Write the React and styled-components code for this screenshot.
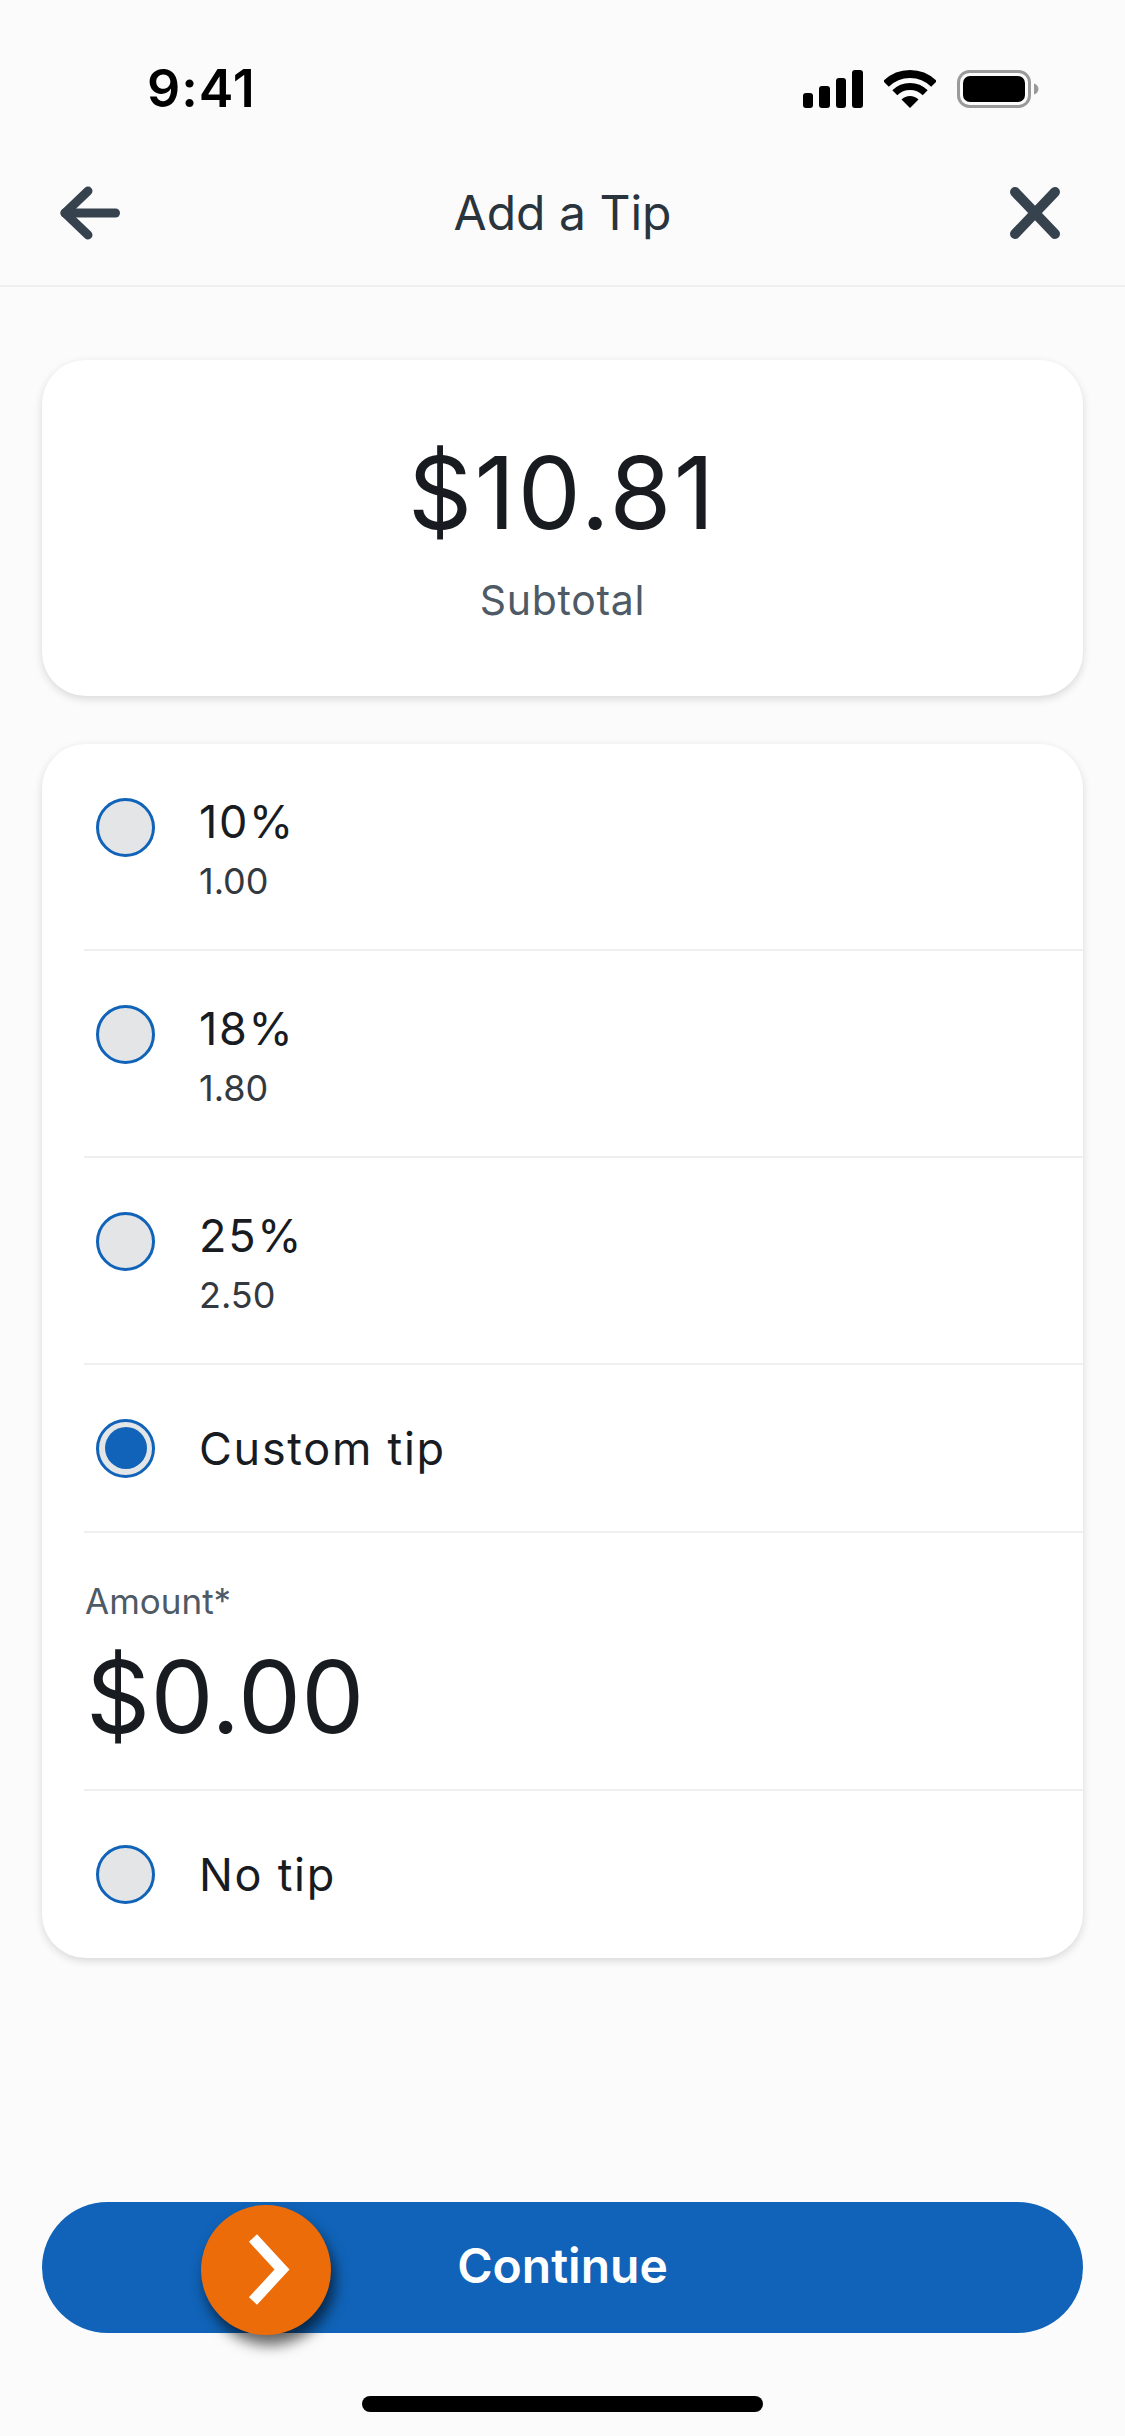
import React from 'react';
import styled, { createGlobalStyle } from 'styled-components';

const GlobalStyle = createGlobalStyle`
  * {
    box-sizing: border-box;
  }

  body {
    margin: 0;
    background-color: #fbfbfb;
    font-family: Inter, "Liberation Sans", sans-serif;
  }
`;

const Screen = styled.div`
  display: flex;
  flex-direction: column;
  width: 1125px;
  height: 2436px;
  overflow: hidden;
  background-color: #fbfbfb;
`;

const StatusBar = styled.div`
  display: flex;
  align-items: center;
  justify-content: space-between;
  height: 140px;
  padding: 37px 86px 0 147px;
`;

const Clock = styled.span`
  font-size: 52px;
  font-weight: 600;
  letter-spacing: 1px;
  line-height: 1;
  color: #000;
`;

const StatusIcons = styled.div`
  display: flex;
  align-items: center;
  gap: 21px;
`;

const NavBar = styled.header`
  display: grid;
  grid-template-columns: 1fr auto 1fr;
  align-items: center;
  height: 147px;
  padding: 0 60px;
  margin-bottom: 73px;
  border-bottom: 2px solid #eeeeee;

  & > svg:last-child {
    justify-self: end;
    margin-right: 5px;
  }
`;

const NavTitle = styled.h1`
  margin: 0;
  font-size: 48px;
  font-weight: 400;
  color: #2a343d;
`;

const Content = styled.main`
  display: flex;
  flex-direction: column;
  flex: 1;
  gap: 48px;
  padding: 0 42px;
`;

const Card = styled.section`
  padding-bottom: 1px;
  background-color: #fff;
  border-radius: 44px;
  box-shadow: 0 3px 8px rgba(0, 0, 0, 0.14);
`;

const SubtotalCard = styled(Card)`
  display: flex;
  flex-direction: column;
  align-items: center;
  height: 336px;
  padding-top: 72px;
`;

const SubtotalValue = styled.div`
  font-size: 100px;
  letter-spacing: 2.4px;
  line-height: 121px;
  color: #181b1f;
`;

const SubtotalLabel = styled.div`
  margin-top: 23px;
  font-size: 41px;
  letter-spacing: 0.7px;
  line-height: 48px;
  color: #4e5a65;
`;

const OptionRow = styled.div`
  display: flex;
  align-items: ${(props) => (props.$tall ? 'flex-start' : 'center')};
  gap: 44px;
  height: ${(props) => (props.$tall ? '205px' : '166px')};
  padding: ${(props) => (props.$tall ? '54px 0 0 54px' : '0 0 0 54px')};
`;

const Divider = styled.div`
  height: 2px;
  margin-left: 42px;
  background-color: #efefef;
`;

const Radio = styled.div`
  display: flex;
  align-items: center;
  justify-content: center;
  flex-shrink: 0;
  width: 59px;
  height: 59px;
  border: 3px solid #1063b8;
  border-radius: 50%;
  background-color: #e4e5e7;
`;

const RadioDot = styled.div`
  width: 42px;
  height: 42px;
  border-radius: 50%;
  background-color: #1063b8;
`;

const OptionText = styled.div`
  display: flex;
  flex-direction: column;
  margin-top: -3px;
`;

const OptionLabel = styled.div`
  font-size: 45px;
  line-height: 53px;
  letter-spacing: 1.7px;
  color: #181b1f;
`;

const OptionAmount = styled.div`
  margin-top: 11px;
  font-size: 36px;
  line-height: 44px;
  color: #33393f;
`;

const AmountField = styled.div`
  display: flex;
  flex-direction: column;
  height: 256px;
  padding: 47px 0 0 43px;
`;

const AmountLabel = styled.div`
  font-size: 35px;
  line-height: 42px;
  color: #4e5a65;
`;

const AmountValue = styled.div`
  margin-top: 14px;
  margin-left: 1px;
  font-size: 100px;
  letter-spacing: 0.3px;
  line-height: 121px;
  color: #181b1f;
`;

const ButtonWrap = styled.div`
  padding: 0 42px;
`;

const ContinueButton = styled.button`
  position: relative;
  display: flex;
  align-items: center;
  justify-content: center;
  width: 100%;
  height: 131px;
  padding: 0 0 5px;
  border: none;
  border-radius: 66px;
  background-color: #1063b8;
  font-family: inherit;
  font-size: 48px;
  font-weight: 600;
  color: #fff;
`;

const SwipeThumb = styled.span`
  position: absolute;
  top: 3px;
  left: 159px;
  display: flex;
  align-items: center;
  justify-content: center;
  width: 130px;
  height: 130px;
  border-radius: 50%;
  background-color: #ec6c0a;
  box-shadow: 4px 10px 14px rgba(0, 0, 0, 0.6);
`;

const HomeArea = styled.div`
  display: flex;
  justify-content: center;
  padding: 63px 0 24px;
`;

const HomeIndicator = styled.div`
  width: 401px;
  height: 16px;
  border-radius: 8px;
  background-color: #000;
`;

const SignalIcon = () => (
  <svg width="60" height="38" viewBox="0 0 60 38" fill="#000">
    <rect x="0" y="23" width="10" height="15" rx="3" />
    <rect x="16" y="16" width="11" height="22" rx="3" />
    <rect x="33" y="8" width="10" height="30" rx="3" />
    <rect x="49" y="0" width="11" height="38" rx="3" />
  </svg>
);

const WifiIcon = () => (
  <svg width="52" height="38" viewBox="0 0 52 38" fill="none">
    <path d="M2 14A34 34 0 0 1 50 14" stroke="#000" strokeWidth="8" />
    <path d="M10.8 22.8A21.5 21.5 0 0 1 41.2 22.8" stroke="#000" strokeWidth="7" />
    <path d="M26 38L17.5 29.5A12 12 0 0 1 34.5 29.5Z" fill="#000" />
  </svg>
);

const BatteryIcon = () => (
  <svg width="82" height="38" viewBox="0 0 82 38">
    <rect x="1.5" y="1.5" width="71" height="35" rx="11" fill="none" stroke="#9a9a9a" strokeWidth="3" />
    <rect x="6" y="6" width="62" height="26" rx="7" fill="#000" />
    <path d="M77 13.5c2.600 0.800 4.500 3 4.500 5.500s-1.900 4.700-4.500 5.500z" fill="#9a9a9a" />
  </svg>
);

const BackIcon = () => (
  <svg width="60" height="56" viewBox="0 0 60 56" fill="none" stroke="#36424d" strokeWidth="9" strokeLinecap="round" strokeLinejoin="round">
    <path d="M55.500 28H5" />
    <path d="M28 6L5 28L28 50" />
  </svg>
);

const CloseIcon = () => (
  <svg width="50" height="52" viewBox="0 0 50 52" fill="none" stroke="#36424d" strokeWidth="10" strokeLinecap="round">
    <path d="M5 5L45 47" />
    <path d="M45 5L5 47" />
  </svg>
);

const ChevronIcon = () => (
  <svg width="48" height="72" viewBox="0 0 48 72" fill="none" stroke="#fff" strokeWidth="11">
    <path d="M11 4L40 35.500L11 67" />
  </svg>
);

const percentOptions = [
  { label: '10%', amount: '1.00' },
  { label: '18%', amount: '1.80' },
  { label: '25%', amount: '2.50' },
];

function App() {
  return (
    <Screen>
      <GlobalStyle />
      <StatusBar>
        <Clock>9:41</Clock>
        <StatusIcons>
          <SignalIcon />
          <WifiIcon />
          <BatteryIcon />
        </StatusIcons>
      </StatusBar>

      <NavBar>
        <BackIcon />
        <NavTitle>Add a Tip</NavTitle>
        <CloseIcon />
      </NavBar>

      <Content>
        <SubtotalCard>
          <SubtotalValue>$10.81</SubtotalValue>
          <SubtotalLabel>Subtotal</SubtotalLabel>
        </SubtotalCard>

        <Card>
          {percentOptions.map((option) => (
            <React.Fragment key={option.label}>
              <OptionRow $tall>
                <Radio />
                <OptionText>
                  <OptionLabel>{option.label}</OptionLabel>
                  <OptionAmount>{option.amount}</OptionAmount>
                </OptionText>
              </OptionRow>
              <Divider />
            </React.Fragment>
          ))}
          <OptionRow>
            <Radio>
              <RadioDot />
            </Radio>
            <OptionLabel>Custom tip</OptionLabel>
          </OptionRow>
          <Divider />
          <AmountField>
            <AmountLabel>Amount*</AmountLabel>
            <AmountValue>$0.00</AmountValue>
          </AmountField>
          <Divider />
          <OptionRow>
            <Radio />
            <OptionLabel>No tip</OptionLabel>
          </OptionRow>
        </Card>
      </Content>

      <ButtonWrap>
        <ContinueButton>
          <SwipeThumb>
            <ChevronIcon />
          </SwipeThumb>
          Continue
        </ContinueButton>
      </ButtonWrap>

      <HomeArea>
        <HomeIndicator />
      </HomeArea>
    </Screen>
  );
}

export default App;
